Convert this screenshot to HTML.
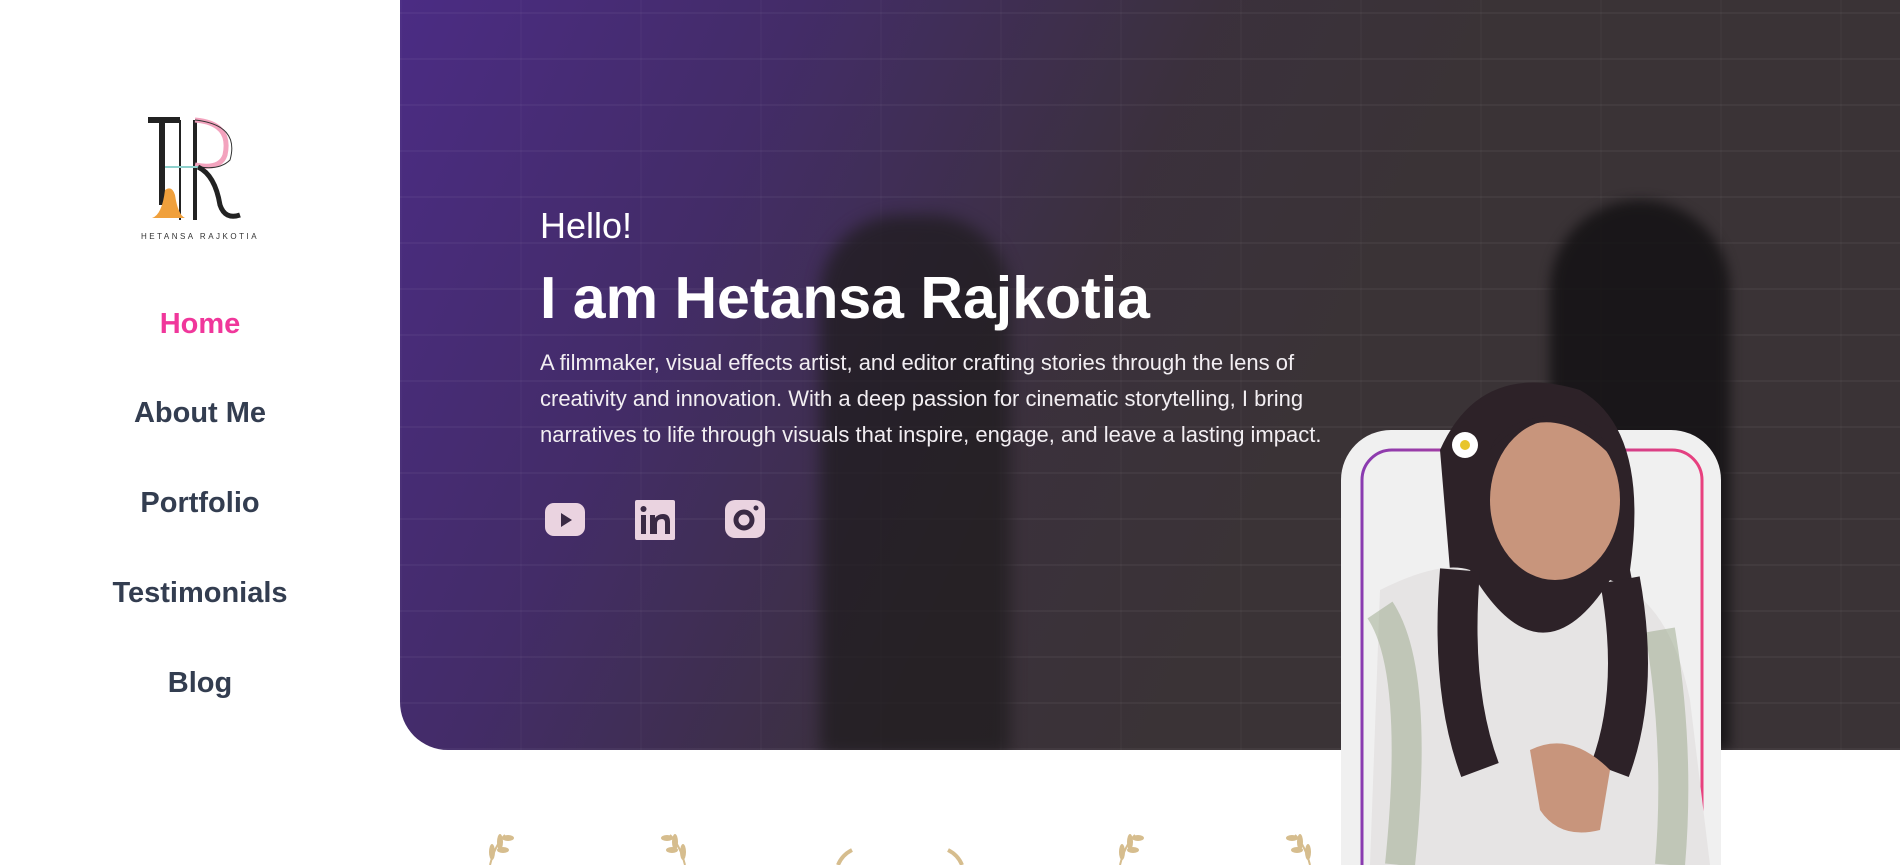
<!DOCTYPE html>
<html><head><meta charset="utf-8"><style>
*{margin:0;padding:0;box-sizing:border-box}
html,body{width:1900px;height:865px;overflow:hidden}
body{background:#fff;font-family:"Segoe UI","Liberation Sans",sans-serif}
#w{position:relative;width:1900px;height:865px;overflow:hidden}
.side{position:absolute;left:0;top:0;width:400px;height:865px;background:#fff}
.nav a{position:absolute;left:0;width:400px;text-align:center;font-weight:bold;font-size:29px;color:#333d50;text-decoration:none}
.hero{position:absolute;left:400px;top:0;width:1500px;height:750px;border-radius:0 0 0 48px;overflow:hidden;
background:linear-gradient(115deg,rgba(76,44,136,.95) 0%,rgba(70,42,120,.75) 22%,rgba(60,44,70,.35) 45%,rgba(0,0,0,0) 60%),#3a3336}
.brick{position:absolute;inset:0;background:
repeating-linear-gradient(0deg,rgba(255,255,255,.04) 0 2px,transparent 2px 46px),
repeating-linear-gradient(90deg,rgba(255,255,255,.02) 0 2px,transparent 2px 120px)}
.t{position:absolute;color:#fff}
</style></head><body><div id="w">
<div class="side">
<svg style="position:absolute;left:140px;top:115px" width="120" height="130" viewBox="0 0 120 130">
<path d="M8 5 H40 M22 5 V90" stroke="#222" stroke-width="6" fill="none"/>
<path d="M40 5 V105" stroke="#222" stroke-width="2" fill="none"/>
<path d="M55 5 V105" stroke="#222" stroke-width="4" fill="none"/>
<path d="M55 5 Q92 8 85 40 Q80 55 55 50" stroke="#f3a3be" stroke-width="5" fill="none"/>
<path d="M55 5 Q100 10 90 45 Q80 55 60 52" stroke="#333" stroke-width="1" fill="none"/>
<path d="M25 52 H60" stroke="#8ed0cc" stroke-width="2"/>
<path d="M58 52 Q75 60 80 90 Q85 105 100 100" stroke="#222" stroke-width="5" fill="none"/>
<path d="M12 103 Q22 100 25 75 Q32 70 35 80 Q38 100 45 103 Z" fill="#f0a03c"/>
<text x="60" y="124" font-size="8" letter-spacing="2.5" text-anchor="middle" fill="#333" font-family="Liberation Sans">HETANSA RAJKOTIA</text>
</svg>
<div class="nav">
<a style="top:308px;color:#f0379b">Home</a>
<a style="top:397px">About Me</a>
<a style="top:487px">Portfolio</a>
<a style="top:577px">Testimonials</a>
<a style="top:667px">Blog</a>
</div>
</div>
<div class="hero"><div class="brick"></div>
<div style="position:absolute;left:420px;top:215px;width:190px;height:540px;background:#1f1c1e;border-radius:80px 80px 0 0;opacity:.75;filter:blur(8px)"></div>
<div style="position:absolute;left:1150px;top:200px;width:180px;height:550px;background:#141214;border-radius:90px 90px 0 0;opacity:.85;filter:blur(6px)"></div>
<div class="t" style="left:140px;top:205px;font-size:36px;font-weight:300">Hello!</div>
<div class="t" style="left:140px;top:264px;font-size:59px;font-weight:bold">I am Hetansa Rajkotia</div>
<div class="t" style="left:140px;top:345px;width:810px;font-size:22px;line-height:36px;color:#f2eef2">A filmmaker, visual effects artist, and editor crafting stories through the lens of creativity and innovation. With a deep passion for cinematic storytelling, I bring narratives to life through visuals that inspire, engage, and leave a lasting impact.</div>
<svg style="position:absolute;left:145px;top:500px" width="230" height="42">
<rect x="0" y="3" width="40" height="33" rx="9" fill="#ead3e0"/><path d="M16 13 V27 L27 20 Z" fill="#3a2a44"/>
<rect x="90" y="0" width="40" height="40" rx="2" fill="#ead3e0"/>
<rect x="96" y="15" width="5" height="19" fill="#3a2a44"/><circle cx="98.5" cy="9" r="3" fill="#3a2a44"/>
<path d="M105 34 V15 h5 v3 q3-4 8-4 q7 0 7 8 v12 h-5 v-11 q0-4-3-4 q-5 0-5 5 v10z" fill="#3a2a44"/>
<rect x="180" y="0" width="40" height="38" rx="10" fill="#ead3e0"/><circle cx="199" cy="20" r="8" fill="none" stroke="#3a2a44" stroke-width="5"/><circle cx="211" cy="8" r="2.5" fill="#3a2a44"/>
</svg>
</div>
<div style="position:absolute;left:1341px;top:430px;width:380px;height:435px;background:#f0f0f0;border-radius:50px 50px 0 0"></div>
<svg style="position:absolute;left:1360px;top:448px" width="344" height="417">
<defs><linearGradient id="g" x1="0" x2="1"><stop offset="0" stop-color="#8a3bb0"/><stop offset="1" stop-color="#e8407e"/></linearGradient></defs>
<rect x="2" y="2" width="340" height="560" rx="30" fill="none" stroke="url(#g)" stroke-width="3"/>
</svg>
<svg style="position:absolute;left:1360px;top:370px" width="370" height="495">
<path d="M80 80 Q120 -10 220 20 Q290 60 270 200 Q290 300 300 420 L90 420 Q60 280 90 200 Z" fill="#2d2228"/>
<path d="M20 220 Q80 190 110 200 Q180 320 250 210 Q310 230 330 330 L350 495 L10 495 Z" fill="#e6e4e4"/>
<path d="M20 240 Q60 300 40 495 M300 260 Q320 380 310 495" stroke="#9aa78a" stroke-width="30" fill="none" opacity=".5"/>
<path d="M100 200 Q90 320 120 400 M260 210 Q280 320 250 400" stroke="#2d2228" stroke-width="40" fill="none"/>
<ellipse cx="195" cy="130" rx="65" ry="80" fill="#c8957c"/>
<path d="M130 80 Q190 20 255 90 Q240 50 195 45 Q140 50 130 80Z" fill="#2d2228"/>
<circle cx="105" cy="75" r="13" fill="#fff"/><circle cx="105" cy="75" r="5" fill="#e8c52a"/>
<path d="M170 380 Q210 360 250 400 L240 460 Q200 470 180 440Z" fill="#c8957c"/>
</svg>
<svg style="position:absolute;left:0;top:830px" width="1340" height="35">
<g fill="#d6bd8e">
<g transform="translate(470,0)"><path d="M20 35 Q25 15 35 5" stroke="#d6bd8e" stroke-width="2" fill="none"/><ellipse cx="30" cy="12" rx="3" ry="8"/><ellipse cx="38" cy="8" rx="6" ry="3"/><ellipse cx="22" cy="22" rx="3" ry="8"/><ellipse cx="33" cy="20" rx="6" ry="3"/></g>
<g transform="translate(655,0)"><path d="M30 35 Q25 15 15 5" stroke="#d6bd8e" stroke-width="2" fill="none"/><ellipse cx="20" cy="12" rx="3" ry="8"/><ellipse cx="12" cy="8" rx="6" ry="3"/><ellipse cx="28" cy="22" rx="3" ry="8"/><ellipse cx="17" cy="20" rx="6" ry="3"/></g>
<g transform="translate(1100,0)"><path d="M20 35 Q25 15 35 5" stroke="#d6bd8e" stroke-width="2" fill="none"/><ellipse cx="30" cy="12" rx="3" ry="8"/><ellipse cx="38" cy="8" rx="6" ry="3"/><ellipse cx="22" cy="22" rx="3" ry="8"/><ellipse cx="33" cy="20" rx="6" ry="3"/></g>
<g transform="translate(1280,0)"><path d="M30 35 Q25 15 15 5" stroke="#d6bd8e" stroke-width="2" fill="none"/><ellipse cx="20" cy="12" rx="3" ry="8"/><ellipse cx="12" cy="8" rx="6" ry="3"/><ellipse cx="28" cy="22" rx="3" ry="8"/><ellipse cx="17" cy="20" rx="6" ry="3"/></g>
<path d="M838 35 Q842 25 852 20 M962 35 Q958 25 948 20" stroke="#d6bd8e" stroke-width="4" fill="none"/>
</g></svg>
</div></body></html>
